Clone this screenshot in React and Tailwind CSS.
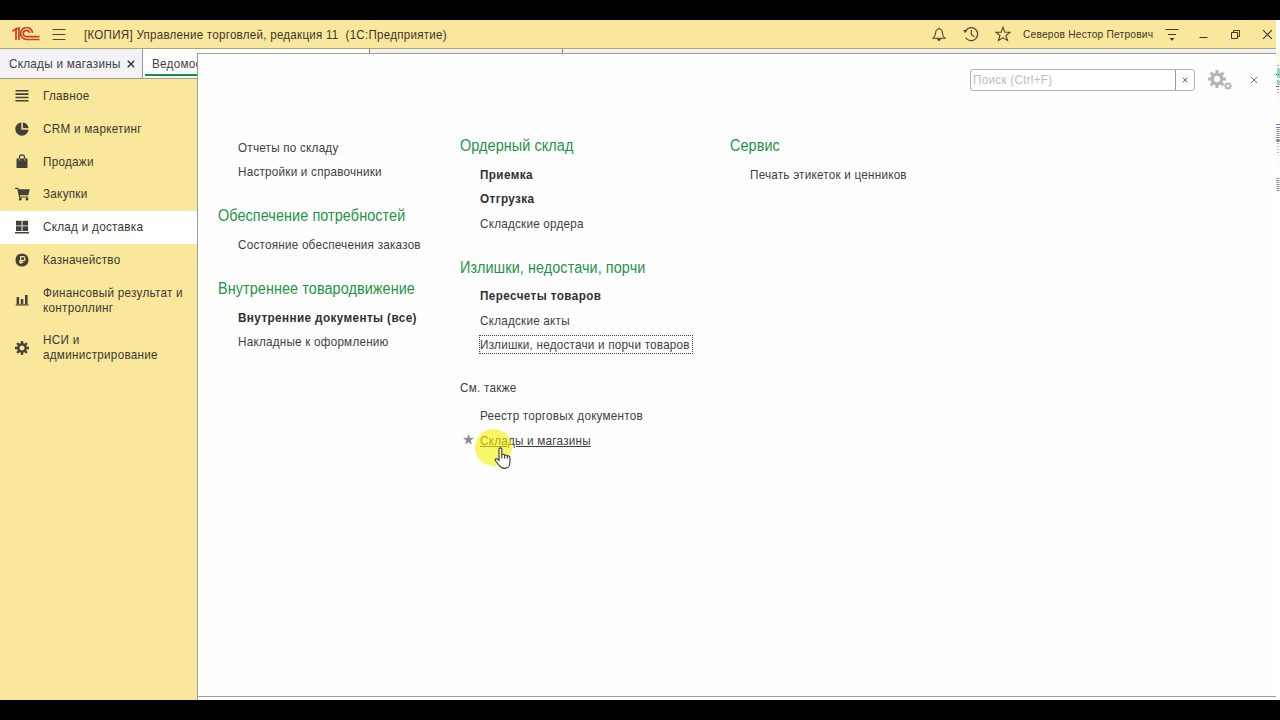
const NARROW = "inline-block origin-left scale-x-90";

function Section({ title, small, children }) {
  return (
    <section className="mb-[15px]">
      {title && (
        <h2
          className={
            small
              ? "flex h-[31.6px] items-center whitespace-nowrap text-[13px] tracking-[0.3px]"
              : "flex h-[33.5px] items-center whitespace-nowrap pt-px text-[16px] tracking-[0.1px] text-[#239447]"
          }
        >
          <span className={NARROW}>{title}</span>
        </h2>
      )}
      {children}
    </section>
  );
}

function Item({ children, bold, focused, underlined }) {
  return (
    <div className="flex h-[24.4px] items-center whitespace-nowrap pl-[19.500px] text-[13px]">
      <span
        className={`flex items-center ${focused ? "-ml-[1px] h-[19px] w-[214px] border border-dotted border-[#444]" : ""}`}
      >
        <span
          className={`${NARROW} ${bold ? "font-bold tracking-[0.45px] text-[#303030]" : "tracking-[0.25px]"} ${underlined ? "underline underline-offset-1" : ""}`}
        >
          {children}
        </span>
      </span>
    </div>
  );
}

function Gear({ className }) {
  return (
    <svg viewBox="-10 -10 20 20" className={className} fill="none" stroke="currentColor">
      <circle r="5.4" strokeWidth="3.6" />
      <path
        strokeWidth="3.4"
        d="M0-6.500V-10M0 6.500V10M-6.500 0H-10M6.500 0H10M4.600-4.600L7-7M-4.600-4.600L-7-7M4.600 4.600L7 7M-4.600 4.600L-7 7"
      />
    </svg>
  );
}

const icons = {
  menu: (
    <svg viewBox="0 0 14 14" className="size-[14px]" fill="#444039">
      <path d="M.5 1h13v1.600H.5zM.5 4.300h13v1.600H.5zM.5 7.700h13v1.600H.5zM.5 11h13v1.600H.5z" />
    </svg>
  ),
  pie: (
    <svg viewBox="0 0 14 14" className="size-[14px]" fill="#444039">
      <path d="M6.500.5v7h7A6.600 6.600 0 1 1 6.500.5z" />
      <path d="M7.700.5v5.800h5.800A6.500 6.500 0 0 0 7.700.5z" />
      <path d="M7.100 6.900V1M7.100 6.900H13" stroke="#f8e79b" strokeWidth=".8" />
    </svg>
  ),
  bag: (
    <svg viewBox="0 0 14 14" className="-mt-[2px] size-[14px]" fill="#444039">
      <path d="M1.500 4.500h11V14h-11z" />
      <path d="M4.500 6.500V3.300a2.500 2.500 0 0 1 5 0v3.200" fill="none" stroke="#444039" strokeWidth="1.200" />
      <path d="M4.500 5v1.500M9.500 5v1.500" stroke="#f8e79b" strokeWidth=".8" />
    </svg>
  ),
  cart: (
    <svg viewBox="0 0 15 14" className="h-[14px] w-[15px]" fill="#444039">
      <path d="M0 .7h3.200l.6 1.600h11L13.300 8.300H4.900l.3 1.200h8v1.100H4.100L2.300 1.900H0z" />
      <circle cx="5.300" cy="12" r="1.500" />
      <circle cx="12" cy="12" r="1.500" />
    </svg>
  ),
  store: (
    <svg viewBox="0 0 14 14" className="size-[14px]" fill="#444039">
      <path d="M1 .8h5.600v4.600H1zM7.500.8h5.600v4.600H7.500zM1 6.200h5.600v4.700H1zM7.500 6.200h5.600v4.700H7.500zM0 12h14v1.500H0z" />
    </svg>
  ),
  ruble: (
    <svg viewBox="0 0 14 14" className="size-[14px]">
      <circle cx="7" cy="7" r="6.600" fill="#444039" />
      <path d="M5.700 11V3.700h2.200a2 2 0 0 1 0 4H4.200M4.200 9.300h4" fill="none" stroke="#f8e79b" strokeWidth="1.200" />
    </svg>
  ),
  bars: (
    <svg viewBox="0 0 14 14" className="size-[14px]" fill="#444039">
      <path d="M1.600 4h2.500v7H1.600zM5.800 6h2.500v5H5.800zM10 2h2.600v9H10zM.8 11.300h12.700v1.200H.8z" />
    </svg>
  ),
  gear: <Gear className="size-[14px] text-[#444039]" />,
};

const nav = [
  ["menu", "Главное"],
  ["pie", "CRM и маркетинг"],
  ["bag", "Продажи"],
  ["cart", "Закупки"],
  ["store", "Склад и доставка"],
  ["ruble", "Казначейство"],
  ["bars", "Финансовый результат и контроллинг"],
  ["gear", "НСИ и администрирование"],
];

function Cross({ className }) {
  return (
    <svg viewBox="0 0 10 10" className={className} fill="none" stroke="currentColor">
      <path d="M1 1l8 8M9 1L1 9" />
    </svg>
  );
}

function Header() {
  return (
    <header className="flex h-[29px] w-[1276px] items-center border-b border-[#aaa58a] bg-[#f9e79c] text-[#3b372c]">
      <svg viewBox="0 0 28 14" className="ml-3 h-[14px] w-[28px]" fill="none" stroke="#d23b27" strokeWidth="1.700">
        <path d="M.5 4.300L4 1.800V13M7 13V1L4.500 2" />
        <path d="M20.600 5.800A6 6 0 1 0 14.500 12.500H27.500" />
        <path d="M17.600 6A3.200 3.200 0 1 0 14.500 9.700H27.500" />
      </svg>
      <svg viewBox="0 0 14 12" className="ml-[12px] mt-px h-3 w-[14px]" stroke="#4d493a">
        <path d="M.5 .5h13M.5 5.500h13M.5 10.500h13" />
      </svg>
      <h1 className="ml-[18px] origin-left scale-x-[0.89] whitespace-pre pt-px text-[13px] tracking-[0.3px]">
        {"[КОПИЯ] Управление торговлей, редакция 11  (1С:Предприятие)"}
      </h1>
      <div className="ml-auto flex items-center">
        <svg viewBox="0 0 14 14" className="size-[14px]" fill="none" stroke="#4d493a" strokeWidth="1.100">
          <path d="M1 11.200c2-1.500 2.500-3 2.600-5.200C3.700 3.500 5 2 7 2s3.300 1.500 3.400 4c.1 2.200.6 3.700 2.600 5.200zM7 .4V2" />
          <path d="M5.600 12h2.800L7 13.800z" fill="#3b372c" />
        </svg>
        <svg viewBox="0 0 16 16" className="ml-[17px] size-4" fill="none" stroke="#4d493a" strokeWidth="1.200">
          <path d="M2.200 5.500A6.500 6.500 0 1 1 2.600 11.500M8.300 4v4.500l3 2.200" />
          <path d="M.3 4l4.200.3-2.700 3z" fill="#4d493a" stroke="none" />
        </svg>
        <svg viewBox="0 0 16 16" className="ml-4 size-4" fill="none" stroke="#4d493a" strokeWidth="1.100">
          <path d="M8 1.200l1.900 4.900 5.200.2-4.100 3.200 1.500 5L8 11.600l-4.500 2.900 1.500-5L.9 6.300l5.200-.2z" />
        </svg>
        <span className="ml-3 w-[130px] whitespace-nowrap text-[11px]">
          <span className="inline-block origin-left scale-x-[0.93] tracking-[0.2px]">Северов Нестор Петрович</span>
        </span>
        <svg viewBox="0 0 14 13" className="ml-[12px] h-[13px] w-[14px]" stroke="#3b372c">
          <path d="M.5 1.500h13M3 6.500h8" />
          <path d="M4.500 10h5L7 12.700z" fill="#3b372c" stroke="none" />
        </svg>
        <svg viewBox="0 0 9 10" className="ml-[20px] h-[10px] w-[9px]" stroke="#3b372c">
          <path d="M.5 8.500h8" />
        </svg>
        <svg viewBox="0 0 9 9" className="ml-[23px] size-[9px]" fill="none" stroke="#3b372c">
          <path d="M.5 2.500h6v6h-6zM2.500 2.500v-2h6v6h-2" />
        </svg>
        <Cross className="ml-[22px] mr-[3px] size-[11px] text-[#3b372c]" />
      </div>
    </header>
  );
}

function Panel() {
  return (
    <main className="absolute left-[197px] top-[53px] h-[644px] w-[1079px] border-y border-l border-[#9c9c9c] bg-[#fefefe] text-[#3f3f3f]">
      <div className="flex h-[52px] items-center justify-end">
        <div className="flex h-[22px] w-[225px] items-center rounded-[3px] border border-[#b5b5b5] bg-white">
          <span className="flex-1 whitespace-nowrap pl-[2px] text-[13px] tracking-[0.3px] text-[#bdbdbd]">
            <span className={NARROW}>Поиск (Ctrl+F)</span>
          </span>
          <div className="flex h-full w-[19px] items-center justify-center border-l border-[#999]">
            <Cross className="size-[6px] text-[#555] [stroke-width:1.500]" />
          </div>
        </div>
        <div className="-mt-px ml-[13px] flex w-[25px] items-start text-[#b4b4b4]">
          <Gear className="size-[18px] shrink-0" />
          <Gear className="-ml-[2px] mt-[12px] size-2 shrink-0" />
        </div>
        <Cross className="ml-[17px] mr-[18px] size-2 text-[#555]" />
      </div>
      <div className="flex items-start pl-5 pt-[22.8px]">
        <div className="w-[242px] pt-[6.4px]">
          <Section>
            <Item>Отчеты по складу</Item>
            <Item>Настройки и справочники</Item>
          </Section>
          <Section title="Обеспечение потребностей">
            <Item>Состояние обеспечения заказов</Item>
          </Section>
          <Section title="Внутреннее товародвижение">
            <Item bold>Внутренние документы (все)</Item>
            <Item>Накладные к оформлению</Item>
          </Section>
        </div>
        <div className="w-[270px]">
          <Section title="Ордерный склад">
            <Item bold>Приемка</Item>
            <Item bold>Отгрузка</Item>
            <Item>Складские ордера</Item>
          </Section>
          <Section title="Излишки, недостачи, порчи">
            <Item bold>Пересчеты товаров</Item>
            <Item>Складские акты</Item>
            <Item focused>Излишки, недостачи и порчи товаров</Item>
          </Section>
          <Section title="См. также" small>
            <Item>Реестр торговых документов</Item>
            <div className="relative">
              <Item underlined>Склады и магазины</Item>
              <svg viewBox="0 0 12 12" className="absolute left-[3px] top-[6px] size-[11px]" fill="#8f8f8f">
                <path d="M6 0l1.500 4.200 4.500.1-3.600 2.800L9.700 11.500 6 8.900l-3.700 2.600 1.300-4.400L0 4.300l4.500-.1z" />
              </svg>
              <div className="absolute left-[15px] top-px size-[37px] rounded-full bg-[#f5f000] opacity-60" />
              <svg viewBox="0 0 18 23" className="absolute left-[34px] top-[19px] h-[23px] w-[18px]" fill="white" stroke="#333" strokeWidth="1.100">
                <path d="M5 13.500V2.300a1.400 1.400 0 0 1 2.800 0V8c.2-1 2.500-1 2.800.5.500-.9 2.400-.6 2.700.7.700-.7 2.600-.3 2.600 1.300v5.300c0 3-2 5.600-5.300 5.600-3 0-4.200-1.200-5.500-3.200L1.300 13.500c-.7-1.400 1.100-2.500 2.200-1.400zM7.800 8v3.500M10.600 8.500v3M13.300 9.200v2.600" />
              </svg>
            </div>
          </Section>
        </div>
        <Section title="Сервис">
          <Item>Печать этикеток и ценников</Item>
        </Section>
      </div>
    </main>
  );
}

export default function App() {
  return (
    <div className="h-[720px] w-[1280px] overflow-hidden bg-black py-5 font-['Liberation_Sans',Arial,sans-serif]">
      <div className="h-[680px] bg-white">
        <Header />
        <div className="flex h-[30px] w-[1276px] border-b border-[#9d9d8d] bg-[#f3f3f5] text-[13px] tracking-[0.3px] text-[#3f3f3f]">
          <div className="flex w-[143px] items-center whitespace-nowrap border-r border-[#999] pl-[9px]">
            <span className="w-[111px]">
              <span className={NARROW}>Склады и магазины</span>
            </span>
            <Cross className="ml-[7px] size-2 text-[#333] [stroke-width:1.800]" />
          </div>
          <div className="flex w-[227px] border-r border-[#888] bg-white pl-[2px]">
            <div className="mb-[2px] flex flex-1 items-center border-b-2 border-[#12934a] pl-[7px] pt-[4px]">
              <span className={NARROW}>Ведомость</span>
            </div>
          </div>
          <div className="w-[193px] border-r border-[#888]" />
        </div>
        <nav className="h-[621px] w-[198px] border-r border-[#9c9c9c] bg-[#f9e79c] pt-[0.8px]">
          {nav.map(([icon, label], i) => (
            <div
              key={icon}
              className={`flex items-center pl-[15px] text-[13px] leading-[15px] tracking-[0.3px] text-[#3b3930] ${i > 5 ? "h-[47.5px]" : "h-[32.75px]"} ${i === 4 ? "bg-white" : ""}`}
            >
              <span className="flex w-7 shrink-0">{icons[icon]}</span>
              <span className="w-[160px] shrink-0 origin-left scale-x-90 pb-px">{label}</span>
            </div>
          ))}
        </nav>
      </div>
      <Panel />
      <svg viewBox="0 0 4 150" className="absolute left-[1276px] top-[50px] h-[150px] w-1">
        <path d="M0 0h4v150H0z" fill="#fff" />
        <path d="M1 0v15M3 2v12M2 48v8M2 93v22" stroke="#f5f27a" strokeDasharray="1 2" />
        <path d="M2 15v28" stroke="#d779c8" strokeWidth="2" strokeDasharray="1 2" />
        <path d="M2.500 18v10M2.500 31v4" stroke="#92dcae" strokeWidth="3" />
        <path d="M0 24.500h4M0 36.500h4M0 87.500h4M0 130.500h4" stroke="#444" strokeDasharray="1 1" />
        <path d="M0 74.500h4M0 77.500h4M0 90.500h4" stroke="#8b6be0" />
        <path d="M2 79v13M2 128v14" stroke="#888" strokeWidth="3" strokeDasharray="1 1" />
        <path d="M2 93v10" stroke="#76d5ec" strokeWidth="2" strokeDasharray="1 2" />
      </svg>
    </div>
  );
}
